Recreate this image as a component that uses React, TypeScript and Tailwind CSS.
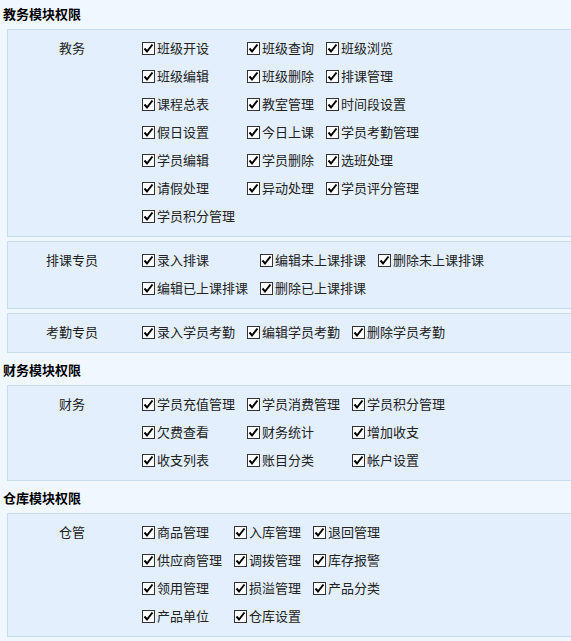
import React from "react";

type Group = { label: string; items: string[] };
type Section = { title: string; groups: Group[] };

const sections: Section[] = [
  {
    title: "教务模块权限",
    groups: [
      {
        label: "教务",
        items: [
          "班级开设", "班级查询", "班级浏览",
          "班级编辑", "班级删除", "排课管理",
          "课程总表", "教室管理", "时间段设置",
          "假日设置", "今日上课", "学员考勤管理",
          "学员编辑", "学员删除", "选班处理",
          "请假处理", "异动处理", "学员评分管理",
          "学员积分管理",
        ],
      },
      {
        label: "排课专员",
        items: ["录入排课", "编辑未上课排课", "删除未上课排课", "编辑已上课排课", "删除已上课排课"],
      },
      {
        label: "考勤专员",
        items: ["录入学员考勤", "编辑学员考勤", "删除学员考勤"],
      },
    ],
  },
  {
    title: "财务模块权限",
    groups: [
      {
        label: "财务",
        items: [
          "学员充值管理", "学员消费管理", "学员积分管理",
          "欠费查看", "财务统计", "增加收支",
          "收支列表", "账目分类", "帐户设置",
        ],
      },
    ],
  },
  {
    title: "仓库模块权限",
    groups: [
      {
        label: "仓管",
        items: [
          "商品管理", "入库管理", "退回管理",
          "供应商管理", "调拨管理", "库存报警",
          "领用管理", "损溢管理", "产品分类",
          "产品单位", "仓库设置",
        ],
      },
    ],
  },
];

const CheckBox = () => (
  <span className="flex h-[13px] w-[13px] shrink-0 items-center justify-center border border-[#333] bg-white">
    <svg width="11" height="11" viewBox="0 0 11 11">
      <path d="M1.5 5.5 L4 8.5 L9.5 1.5" fill="none" stroke="#000" strokeWidth="2" />
    </svg>
  </span>
);

const Item = ({ text }: { text: string }) => (
  <label className="flex h-[28px] items-center whitespace-nowrap">
    <CheckBox />
    <span className="ml-[2px] text-[#222]">{text}</span>
  </label>
);

export default function App() {
  return (
    <div
      className="min-h-screen overflow-hidden bg-[#f0f7ff] pt-px text-[13px]"
      style={{ fontFamily: '"Noto Sans CJK SC", "Noto Sans", sans-serif' }}
    >
      {sections.map((s) => (
        <div key={s.title}>
          <div className="h-[28px] pl-[3px] font-bold leading-[25px] text-black">{s.title}</div>
          {s.groups.map((g) => (
            <div
              key={g.label}
              className="mb-[4px] ml-[7px] flex border-y border-l border-[#c6dcf3] bg-[#e3effd] pb-[6px] pt-[4px]"
            >
              <div className="w-[128px] shrink-0 text-center leading-[28px] text-[#222]">{g.label}</div>
              <div className="ml-[6px] grid grid-cols-[auto_auto_auto] justify-start gap-x-[12px]">
                {g.items.map((t) => (
                  <Item key={t} text={t} />
                ))}
              </div>
            </div>
          ))}
        </div>
      ))}
    </div>
  );
}
